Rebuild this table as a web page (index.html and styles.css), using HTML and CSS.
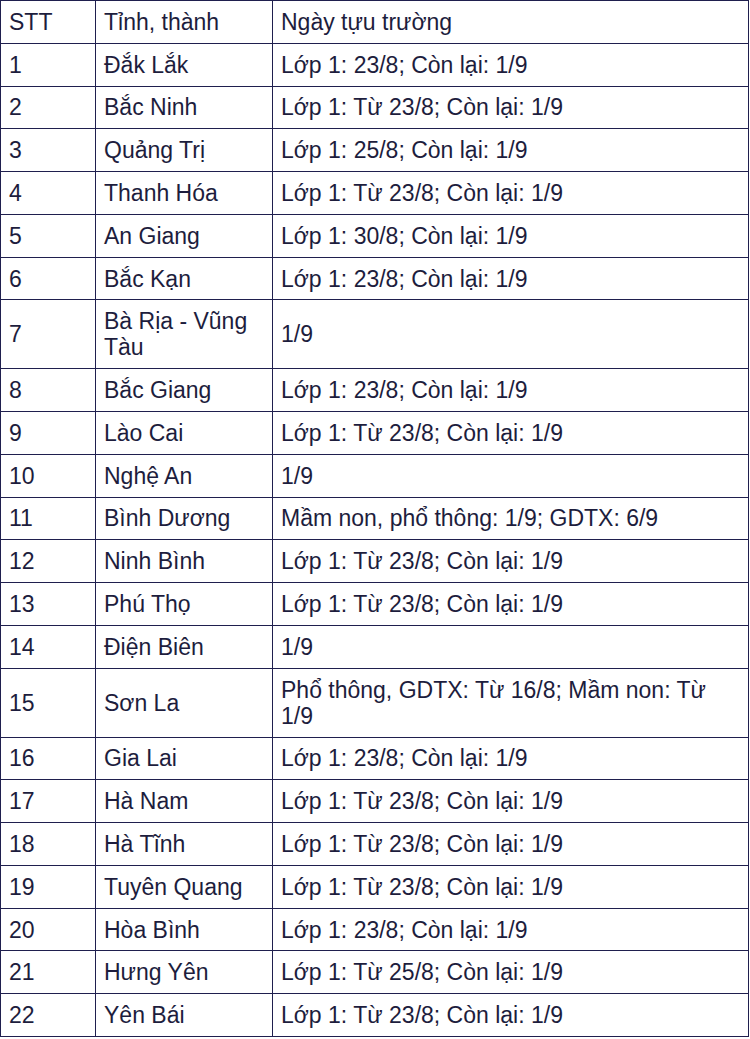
FILE: index.html
```html
<!DOCTYPE html>
<html lang="vi">
<head>
<meta charset="utf-8">
<title>Ngày tựu trường</title>
<link rel="stylesheet" href="styles.css">
</head>
<body>
<table class="schedule">
  <colgroup>
    <col class="c-stt">
    <col class="c-name">
    <col class="c-date">
  </colgroup>
  <tbody>
    <tr><td>STT</td><td>Tỉnh, thành</td><td>Ngày tựu trường</td></tr>
    <tr><td>1</td><td>Đắk Lắk</td><td>Lớp 1: 23/8; Còn lại: 1/9</td></tr>
    <tr><td>2</td><td>Bắc Ninh</td><td>Lớp 1: Từ 23/8; Còn lại: 1/9</td></tr>
    <tr><td>3</td><td>Quảng Trị</td><td>Lớp 1: 25/8; Còn lại: 1/9</td></tr>
    <tr><td>4</td><td>Thanh Hóa</td><td>Lớp 1: Từ 23/8; Còn lại: 1/9</td></tr>
    <tr><td>5</td><td>An Giang</td><td>Lớp 1: 30/8; Còn lại: 1/9</td></tr>
    <tr><td>6</td><td>Bắc Kạn</td><td>Lớp 1: 23/8; Còn lại: 1/9</td></tr>
    <tr><td>7</td><td>Bà Rịa - Vũng Tàu</td><td>1/9</td></tr>
    <tr><td>8</td><td>Bắc Giang</td><td>Lớp 1: 23/8; Còn lại: 1/9</td></tr>
    <tr><td>9</td><td>Lào Cai</td><td>Lớp 1: Từ 23/8; Còn lại: 1/9</td></tr>
    <tr><td>10</td><td>Nghệ An</td><td>1/9</td></tr>
    <tr><td>11</td><td>Bình Dương</td><td>Mầm non, phổ thông: 1/9; GDTX: 6/9</td></tr>
    <tr><td>12</td><td>Ninh Bình</td><td>Lớp 1: Từ 23/8; Còn lại: 1/9</td></tr>
    <tr><td>13</td><td>Phú Thọ</td><td>Lớp 1: Từ 23/8; Còn lại: 1/9</td></tr>
    <tr><td>14</td><td>Điện Biên</td><td>1/9</td></tr>
    <tr><td>15</td><td>Sơn La</td><td>Phổ thông, GDTX: Từ 16/8; Mầm non: Từ 1/9</td></tr>
    <tr><td>16</td><td>Gia Lai</td><td>Lớp 1: 23/8; Còn lại: 1/9</td></tr>
    <tr><td>17</td><td>Hà Nam</td><td>Lớp 1: Từ 23/8; Còn lại: 1/9</td></tr>
    <tr><td>18</td><td>Hà Tĩnh</td><td>Lớp 1: Từ 23/8; Còn lại: 1/9</td></tr>
    <tr><td>19</td><td>Tuyên Quang</td><td>Lớp 1: Từ 23/8; Còn lại: 1/9</td></tr>
    <tr><td>20</td><td>Hòa Bình</td><td>Lớp 1: 23/8; Còn lại: 1/9</td></tr>
    <tr><td>21</td><td>Hưng Yên</td><td>Lớp 1: Từ 25/8; Còn lại: 1/9</td></tr>
    <tr><td>22</td><td>Yên Bái</td><td>Lớp 1: Từ 23/8; Còn lại: 1/9</td></tr>
  </tbody>
</table>
</body>
</html>
```
FILE: styles.css
```css
html, body {
  margin: 0;
  padding: 0;
  background: #ffffff;
}

.schedule {
  width: 749px;
  border-collapse: collapse;
  table-layout: fixed;
  font-family: "Liberation Sans", Arial, sans-serif;
  font-size: 23px;
  line-height: 26px;
  color: #1d1d3d;
}

.c-stt { width: 95px; }
.c-name { width: 177px; }
.c-date { width: auto; }

.schedule td {
  border: 1.5px solid #1f1f4e;
  padding: 7.9px 8px;
  vertical-align: middle;
  text-align: left;
}
```
